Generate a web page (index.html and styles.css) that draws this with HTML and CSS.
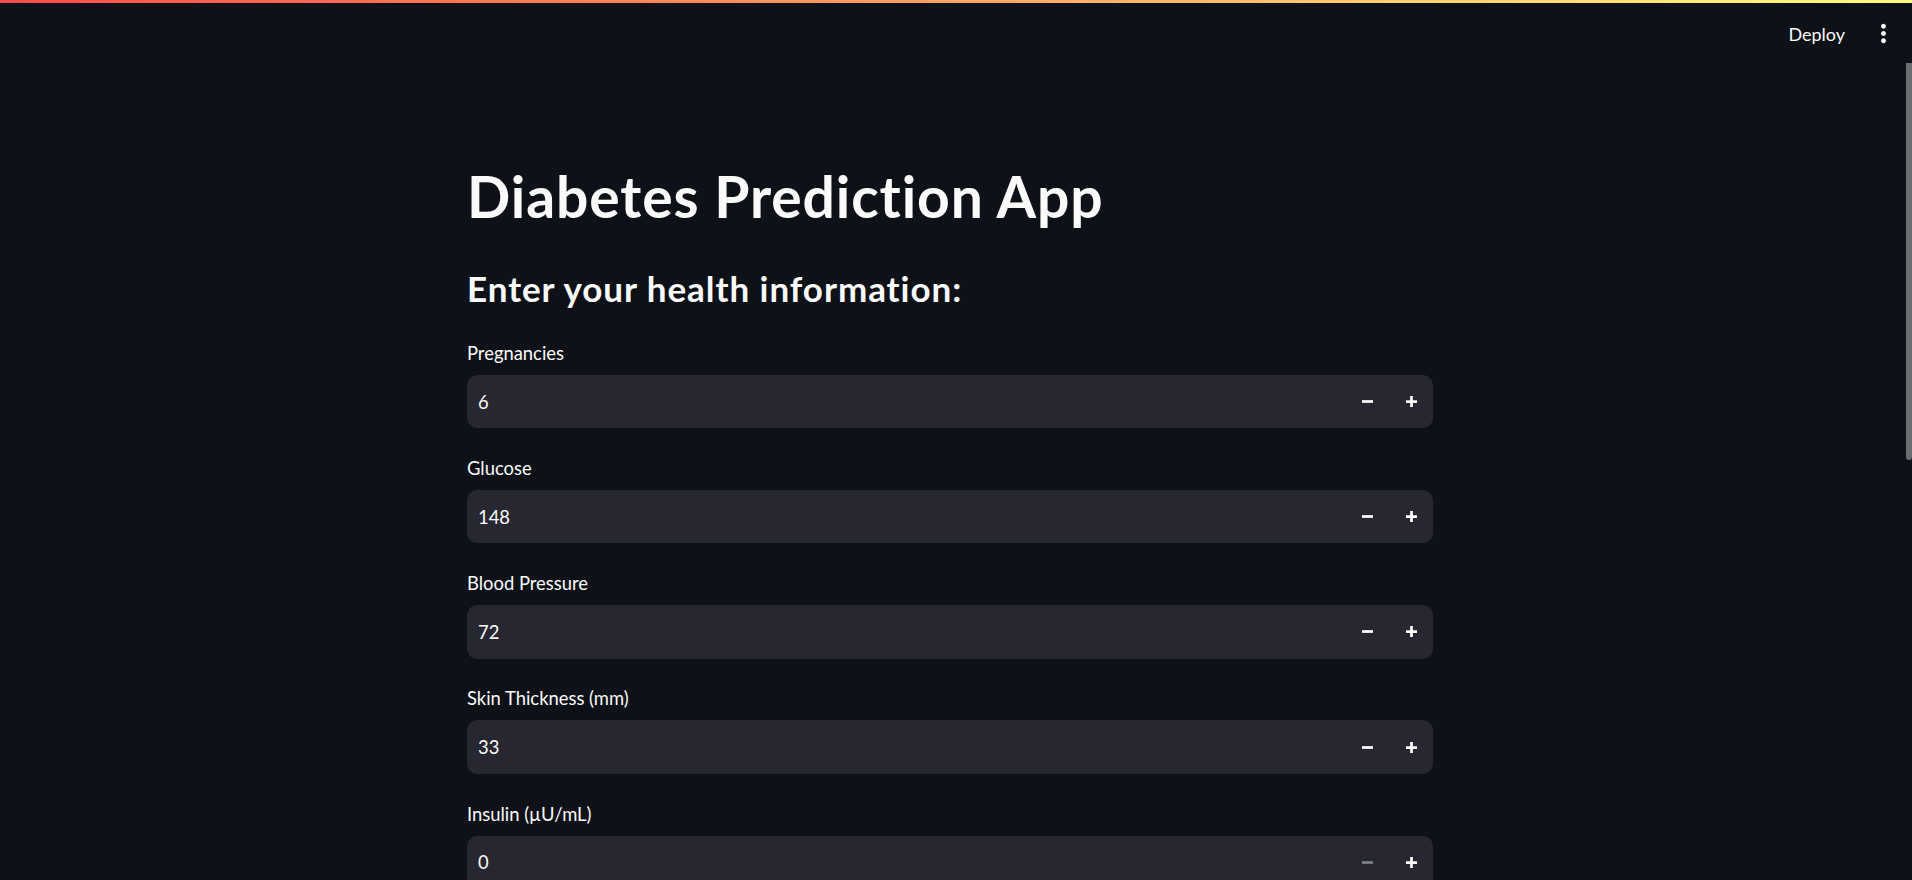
FILE: index.html
```html
<!DOCTYPE html>
<html lang="en">
<head>
<meta charset="utf-8">
<title>Diabetes Prediction App</title>
<link rel="stylesheet" href="styles.css">
</head>
<body>
<div class="app">
  <div class="decoration"></div>
  <header class="header">
    <button class="deploy">Deploy</button>
    <button class="menu" aria-label="Main menu">
      <svg viewBox="0 0 24 24" width="29" height="29"><path fill="currentColor" d="M12 8c1.1 0 2-.9 2-2s-.9-2-2-2-2 .9-2 2 .9 2 2 2zm0 2c-1.1 0-2 .9-2 2s.9 2 2 2 2-.9 2-2-.9-2-2-2zm0 6c-1.1 0-2 .9-2 2s.9 2 2 2 2-.9 2-2-.9-2-2-2z"/></svg>
    </button>
  </header>
  <main class="main">
    <div class="block">
      <h1 class="title">Diabetes Prediction App</h1>
      <h3 class="subheader">Enter your health information:</h3>
      <div class="fields">
        <div class="field">
          <label class="label">Pregnancies</label>
          <div class="numinput">
            <span class="value">6</span>
            <span class="step"><svg viewBox="0 0 8 8" width="11" height="11"><path fill="currentColor" d="M0 3v2h8V3H0z"/></svg></span>
            <span class="step"><svg viewBox="0 0 8 8" width="11" height="11"><path fill="currentColor" d="M3 0v3H0v2h3v3h2V5h3V3H5V0H3z"/></svg></span>
          </div>
        </div>
        <div class="field">
          <label class="label">Glucose</label>
          <div class="numinput">
            <span class="value">148</span>
            <span class="step"><svg viewBox="0 0 8 8" width="11" height="11"><path fill="currentColor" d="M0 3v2h8V3H0z"/></svg></span>
            <span class="step"><svg viewBox="0 0 8 8" width="11" height="11"><path fill="currentColor" d="M3 0v3H0v2h3v3h2V5h3V3H5V0H3z"/></svg></span>
          </div>
        </div>
        <div class="field">
          <label class="label">Blood Pressure</label>
          <div class="numinput">
            <span class="value">72</span>
            <span class="step"><svg viewBox="0 0 8 8" width="11" height="11"><path fill="currentColor" d="M0 3v2h8V3H0z"/></svg></span>
            <span class="step"><svg viewBox="0 0 8 8" width="11" height="11"><path fill="currentColor" d="M3 0v3H0v2h3v3h2V5h3V3H5V0H3z"/></svg></span>
          </div>
        </div>
        <div class="field">
          <label class="label">Skin Thickness (mm)</label>
          <div class="numinput">
            <span class="value">33</span>
            <span class="step"><svg viewBox="0 0 8 8" width="11" height="11"><path fill="currentColor" d="M0 3v2h8V3H0z"/></svg></span>
            <span class="step"><svg viewBox="0 0 8 8" width="11" height="11"><path fill="currentColor" d="M3 0v3H0v2h3v3h2V5h3V3H5V0H3z"/></svg></span>
          </div>
        </div>
        <div class="field">
          <label class="label">Insulin (µU/mL)</label>
          <div class="numinput">
            <span class="value">0</span>
            <span class="step disabled"><svg viewBox="0 0 8 8" width="11" height="11"><path fill="currentColor" d="M0 3v2h8V3H0z"/></svg></span>
            <span class="step"><svg viewBox="0 0 8 8" width="11" height="11"><path fill="currentColor" d="M3 0v3H0v2h3v3h2V5h3V3H5V0H3z"/></svg></span>
          </div>
        </div>
      </div>
    </div>
  </main>
  <div class="scroll-thumb"></div>
</div>
</body>
</html>
```
FILE: styles.css
```css
* { box-sizing: border-box; }
html, body {
  margin: 0;
  padding: 0;
  height: 100%;
  overflow: hidden;
  background: #0e1117;
}
body {
  font-family: Lato, "Source Sans Pro", "Liberation Sans", sans-serif;
  font-variant-ligatures: none;
  color: #fafafa;
}
.app {
  position: relative;
  height: 100vh;
  display: flex;
  flex-direction: column;
}
.decoration {
  height: 3px;
  flex: none;
  background: linear-gradient(90deg, #ff4b4b, #fffd80);
}
.header {
  flex: none;
  height: 61px;
  display: flex;
  justify-content: flex-end;
  align-items: center;
  padding-right: 14px;
}
.deploy {
  background: none;
  border: 0;
  padding: 0;
  margin-right: 24px;
  color: #fafafa;
  font-family: inherit;
  font-size: 18px;
}
.menu {
  background: none;
  border: 0;
  padding: 0;
  color: #fafafa;
  display: flex;
}
.main {
  flex: 1;
  overflow: hidden;
  display: flex;
  justify-content: center;
  padding-right: 12px;
}
.block {
  width: 966px;
}
.title {
  margin: 98px 0 0;
  font-size: 57px;
  font-weight: 700;
  letter-spacing: 0.9px;
  line-height: 1.2;
}
.subheader {
  margin: 37px 0 0;
  font-size: 35px;
  font-weight: 700;
  letter-spacing: 0.95px;
  line-height: 1.2;
}
.fields {
  margin-top: 29.5px;
  display: flex;
  flex-direction: column;
  gap: 25.9px;
}
.field {
  display: flex;
  flex-direction: column;
  gap: 8px;
}
.label {
  font-size: 18.4px;
  line-height: 28px;
}
.numinput {
  height: 53.3px;
  background: #262730;
  border-radius: 10px;
  display: flex;
  align-items: center;
}
.value {
  flex: 1;
  padding-left: 11px;
  font-size: 18.4px;
}
.step {
  width: 44px;
  height: 100%;
  display: flex;
  align-items: center;
  justify-content: center;
  color: #fafafa;
}
.step.disabled {
  color: #7d7f89;
}
.scroll-thumb {
  position: absolute;
  right: 0;
  top: 63px;
  width: 6px;
  height: 397px;
  background: #6b6c70;
  border-radius: 0 0 3px 3px;
}
```
